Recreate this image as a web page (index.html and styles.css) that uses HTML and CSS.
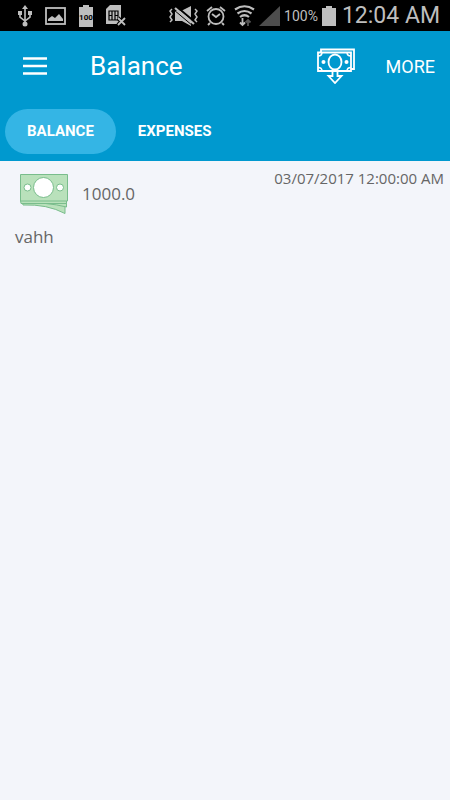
FILE: index.html
```html
<!DOCTYPE html>
<html lang="en">
<head>
<meta charset="utf-8">
<meta name="viewport" content="width=device-width, initial-scale=1">
<title>Balance</title>
<link rel="stylesheet" href="styles.css">
</head>
<body>
<div class="status">
  <div class="status-group notices">
    <svg width="14" height="22" viewBox="0 0 14 22" fill="none" stroke="currentColor" stroke-width="1.600"><path d="M7 3v16M2 9v3l5 4 5-4v-3"/><path d="M7 0l3 4H4zM0 6h4v4H0zM10 6h4v4h-4z" fill="currentColor" stroke="none"/><circle cx="7" cy="19" r="2.500" fill="currentColor" stroke="none"/></svg>
    <svg width="21" height="18" viewBox="0 0 21 18"><rect x="1" y="1" width="19" height="16" fill="none" stroke="currentColor" stroke-width="1.800"/><path d="M3 14v-2l4-3 3 2 4-4 4 5v2z" fill="currentColor"/></svg>
    <svg width="14" height="22" viewBox="0 0 14 22"><path d="M4 0h6v2h4v20H0V2h4z" fill="currentColor"/><text class="level" x="7" y="15" text-anchor="middle">100</text></svg>
    <svg width="20" height="21" viewBox="0 0 20 21"><path d="M4 0h11v19H0V4z" fill="currentColor"/><path d="M3 6h9v9H3zM6 6v9M9 6v9M3 10.500h3M9 10.500h3" fill="none" stroke="#000" stroke-width="1.200"/><path d="M12 13l7 7M19 13l-7 7" stroke="#000" stroke-width="4"/><path d="M12 13l7 7M19 13l-7 7" stroke="currentColor" stroke-width="1.800"/></svg>
  </div>
  <div class="status-group system">
    <svg width="29" height="20" viewBox="0 0 29 20"><path d="M6 5h6l10-5v20l-9-5H6z" fill="currentColor"/><path d="M8 1l19 16" stroke="#000" stroke-width="2"/><path d="M6 2l19 16" stroke="currentColor" stroke-width="2.200"/><path d="M5 4l19 16" stroke="#000" stroke-width="1"/><path d="M3 3L1 5l2 3-2 3 2 3-2 2M26 3l2 2-2 3 2 3-2 3 2 2" fill="none" stroke="currentColor" stroke-width="1.500"/></svg>
    <svg class="alarm" width="20" height="20" viewBox="0 0 20 20" fill="none" stroke="currentColor" stroke-width="1.800"><circle cx="10" cy="10.500" r="7.500"/><path d="M1 5l5-4M14 1l5 4M4 17l-2 2M16 17l2 2M6 8l4 3 4-3"/></svg>
    <svg class="wifi" width="21" height="22" viewBox="0 0 21 22" fill="none" stroke="currentColor" stroke-width="2.200"><path d="M1 4.500q9.500-6.500 19 0M3.500 8.500q7-5 14 0M6 12q4.500-3.500 9 0"/><path d="M8.500 13v7M6 17.500l2.500 2.500 2.500-2.500" stroke-width="1.800"/><path d="M14 21v-6M11.500 17.500L14 15l2.500 2.500" stroke="#555" stroke-width="1.800"/></svg>
    <svg width="21" height="20" viewBox="0 0 21 20"><path d="M21 0v20H0z" fill="#4d4d4d"/></svg>
    <span class="percent">100%</span>
    <svg width="14" height="20" viewBox="0 0 14 20"><path d="M4 0h6v2h4v18H0V2h4z" fill="currentColor"/></svg>
    <time class="clock">12:04 AM</time>
  </div>
</div>
<header>
  <div class="toolbar">
    <button class="menu" type="button" aria-label="Menu"><svg width="24" height="18" viewBox="0 0 24 18"><path d="M0 1.500h24M0 9h24M0 16.500h24" stroke="currentColor" stroke-width="2.600"/></svg></button>
    <h1>Balance</h1>
    <button class="withdraw" type="button" aria-label="Withdraw"><svg width="40" height="36" viewBox="0 0 40 36" fill="none" stroke="currentColor" stroke-width="1.800"><path d="M5 4V1.500h33V21h-3"/><path d="M2 4.500h33V23H2z"/><path d="M2 8Q6 8 6 4.500M31 4.500Q31 8 35 8M2 19.500Q6 19.500 6 23M31 23Q31 19.500 35 19.500" stroke-width="1.500"/><ellipse cx="19" cy="14" rx="6.500" ry="7.500"/><circle cx="7.500" cy="14" r="2" fill="currentColor" stroke="none"/><circle cx="30.500" cy="14" r="2" fill="currentColor" stroke="none"/><path d="M16.500 23v5h-4l6.500 7 6.500-7h-4v-5"/></svg></button>
    <button class="more" type="button">MORE</button>
  </div>
  <nav class="tabs">
    <a class="tab active" href="#balance" aria-current="page">BALANCE</a>
    <a class="tab" href="#expenses">EXPENSES</a>
  </nav>
</header>
<main id="balance">
  <article class="entry">
    <div class="row">
      <svg class="cash" width="50" height="42" viewBox="0 0 50 42" fill="#b9e1bb" stroke="#79bd8c" stroke-width="1"><path d="M3 28h43v12.500Q28 31 4 32z"/><path d="M2 27.500h45.500v6.500Q28 29 3 30z"/><path d="M1.500 27.500h46v3H2z"/><path d="M1.500 1.500h47V28h-47z"/><circle cx="24.500" cy="14.500" r="10" fill="#fff"/><circle cx="8.500" cy="14.500" r="3.500" fill="#fff"/><circle cx="41" cy="14.500" r="3.500" fill="#fff"/></svg>
      <span class="amount">1000.0</span>
      <time class="date" datetime="2017-07-03T00:00">03/07/2017 12:00:00 AM</time>
    </div>
    <p class="note">vahh</p>
  </article>
</main>
</body>
</html>
```
FILE: styles.css
```css
* {
  box-sizing: border-box;
}

body {
  margin: 0;
  min-height: 100vh;
  background: #f3f5fa;
  color: #666;
  font-family: "Open Sans", "Noto Sans", sans-serif;
}

button {
  padding: 0;
  border: 0;
  background: none;
  color: inherit;
  font: inherit;
}

svg {
  display: block;
  flex: none;
}

.status {
  display: flex;
  align-items: center;
  justify-content: space-between;
  height: 31px;
  padding: 0 10px 0 18px;
  background: #000;
  color: #bebebe;
  font-family: Roboto, sans-serif;
}

.status-group {
  display: flex;
  align-items: center;
}

.notices {
  gap: 13px;
}

.level {
  fill: #000;
  font-size: 8px;
  font-weight: 700;
}

.system {
  gap: 4px;
}

.alarm {
  margin: 0 4px;
}

.percent {
  font-size: 14px;
}

.clock {
  margin-left: 2px;
  font-size: 23px;
  line-height: 30px;
}

header {
  background: #0099cf;
  color: #fff;
  font-family: Roboto, sans-serif;
}

.toolbar {
  display: flex;
  align-items: center;
  height: 70px;
  padding: 0 15px 0 23px;
}

h1 {
  flex: 1;
  margin: 0 0 0 43px;
  font-size: 26px;
  font-weight: 400;
  line-height: 36px;
}

.more {
  margin-left: 30px;
  font-size: 18px;
}

.tabs {
  display: flex;
  padding: 8px 5px 7px;
}

.tab {
  padding: 0 22px;
  border-radius: 23px;
  color: inherit;
  font-size: 15px;
  font-weight: 700;
  line-height: 45px;
  text-decoration: none;
}

.active {
  background: #34b5e5;
}

.entry {
  padding: 7px 6px 8px 15px;
}

.row {
  display: flex;
  align-items: center;
}

.cash {
  margin: 5px 13px 5px 4px;
}

.amount {
  font-size: 17px;
  line-height: 24px;
}

.date {
  align-self: flex-start;
  margin-left: auto;
  font-size: 15px;
  line-height: 20px;
}

.note {
  margin: 5px 0 0;
  font-size: 17px;
  line-height: 24px;
}
```
